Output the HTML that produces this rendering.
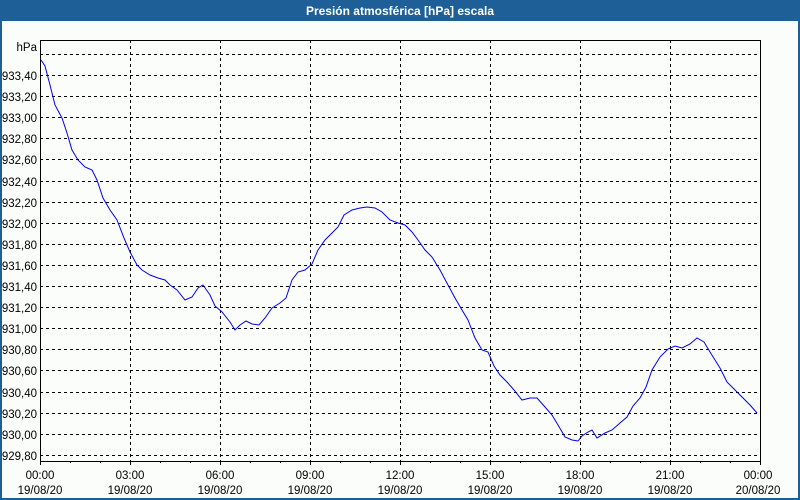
<!DOCTYPE html>
<html><head><meta charset="utf-8"><style>
html,body{margin:0;padding:0;width:800px;height:500px;overflow:hidden;background:#fbfdfb}
</style></head><body>
<svg width="800" height="500" xmlns="http://www.w3.org/2000/svg" font-family="'Liberation Sans',sans-serif" font-size="11.5">
<rect x="0" y="0" width="800" height="500" fill="#fbfdfb"/>
<rect x="0" y="0" width="800" height="21" fill="#1d5f96"/>
<rect x="0" y="0" width="2" height="500" fill="#1d5f96"/>
<rect x="798" y="0" width="2" height="500" fill="#1d5f96"/>
<rect x="0" y="498" width="800" height="2" fill="#1d5f96"/>
<text x="400" y="15" text-anchor="middle" fill="#fff" font-weight="bold" font-size="12">Presión atmosférica [hPa] escala</text>
<g stroke="#000" stroke-width="1" stroke-dasharray="3,3" shape-rendering="crispEdges">
<line x1="40" x2="760" y1="54.5" y2="54.5"/><line x1="40" x2="760" y1="75.5" y2="75.5"/><line x1="40" x2="760" y1="96.5" y2="96.5"/><line x1="40" x2="760" y1="117.5" y2="117.5"/><line x1="40" x2="760" y1="138.5" y2="138.5"/><line x1="40" x2="760" y1="159.5" y2="159.5"/><line x1="40" x2="760" y1="181.5" y2="181.5"/><line x1="40" x2="760" y1="202.5" y2="202.5"/><line x1="40" x2="760" y1="223.5" y2="223.5"/><line x1="40" x2="760" y1="244.5" y2="244.5"/><line x1="40" x2="760" y1="265.5" y2="265.5"/><line x1="40" x2="760" y1="286.5" y2="286.5"/><line x1="40" x2="760" y1="307.5" y2="307.5"/><line x1="40" x2="760" y1="328.5" y2="328.5"/><line x1="40" x2="760" y1="349.5" y2="349.5"/><line x1="40" x2="760" y1="370.5" y2="370.5"/><line x1="40" x2="760" y1="392.5" y2="392.5"/><line x1="40" x2="760" y1="413.5" y2="413.5"/><line x1="40" x2="760" y1="434.5" y2="434.5"/><line x1="40" x2="760" y1="455.5" y2="455.5"/>
<line y1="40" y2="461" x1="130.5" x2="130.5"/><line y1="40" y2="461" x1="220.5" x2="220.5"/><line y1="40" y2="461" x1="310.5" x2="310.5"/><line y1="40" y2="461" x1="400.5" x2="400.5"/><line y1="40" y2="461" x1="490.5" x2="490.5"/><line y1="40" y2="461" x1="580.5" x2="580.5"/><line y1="40" y2="461" x1="670.5" x2="670.5"/>
</g>
<g stroke="#000" shape-rendering="crispEdges">
<rect x="40.5" y="40.5" width="720" height="421" fill="none"/>
<path d="M40.5 461v4M70.5 461v2M100.5 461v2M130.5 461v4M160.5 461v2M190.5 461v2M220.5 461v4M250.5 461v2M280.5 461v2M310.5 461v4M340.5 461v2M370.5 461v2M400.5 461v4M430.5 461v2M460.5 461v2M490.5 461v4M520.5 461v2M550.5 461v2M580.5 461v4M610.5 461v2M640.5 461v2M670.5 461v4M700.5 461v2M730.5 461v2M760.5 461v4"/>
</g>
<polyline fill="none" stroke="#0000ee" stroke-width="1" points="41,60 45,66 50,85 55,105 62,118 67,133 72,150 78,160 85,167 92,170 97,180 103,198 110,210 117,220 124,238 130,252 137,265 142,270 150,275 158,278 165,280 170,285 177,290 185,300 192,297 198,288 203,285 210,295 215,306 222,312 230,322 235,330 240,325 246,321 252,324 259,325 265,318 272,308 280,303 286,298 292,280 298,272 305,270 312,264 318,250 325,240 332,233 338,227 344,215 352,210 360,208 367,207 375,208 382,212 390,220 398,223 405,225 412,232 418,240 425,250 432,257 440,270 448,285 455,298 462,310 468,320 475,338 482,350 488,352 494,366 500,375 507,382 514,390 522,400 530,398 537,398 545,407 552,415 558,425 565,437 572,440 578,441 582,436 588,432 592,430 597,438 605,433 612,430 620,423 627,417 633,406 640,398 646,387 652,370 660,357 668,349 675,346 682,348 690,344 697,338 704,342 710,352 720,368 727,382 735,390 742,397 750,405 757,413"/>
<g fill="#000" text-anchor="end">
<text x="37" y="51">hPa</text>
<text x="37" y="80">933,40</text><text x="37" y="101">933,20</text><text x="37" y="122">933,00</text><text x="37" y="143">932,80</text><text x="37" y="164">932,60</text><text x="37" y="186">932,40</text><text x="37" y="207">932,20</text><text x="37" y="228">932,00</text><text x="37" y="249">931,80</text><text x="37" y="270">931,60</text><text x="37" y="291">931,40</text><text x="37" y="312">931,20</text><text x="37" y="333">931,00</text><text x="37" y="354">930,80</text><text x="37" y="375">930,60</text><text x="37" y="397">930,40</text><text x="37" y="418">930,20</text><text x="37" y="439">930,00</text><text x="37" y="460">929,80</text>
</g>
<g fill="#000" text-anchor="middle">
<text x="40" y="479">00:00</text><text x="40" y="494">19/08/20</text>
<text x="130" y="479">03:00</text><text x="130" y="494">19/08/20</text>
<text x="220" y="479">06:00</text><text x="220" y="494">19/08/20</text>
<text x="310" y="479">09:00</text><text x="310" y="494">19/08/20</text>
<text x="400" y="479">12:00</text><text x="400" y="494">19/08/20</text>
<text x="490" y="479">15:00</text><text x="490" y="494">19/08/20</text>
<text x="580" y="479">18:00</text><text x="580" y="494">19/08/20</text>
<text x="670" y="479">21:00</text><text x="670" y="494">19/08/20</text>
<text x="758" y="479">00:00</text><text x="758" y="494">20/08/20</text>
</g>
</svg>
</body></html>
